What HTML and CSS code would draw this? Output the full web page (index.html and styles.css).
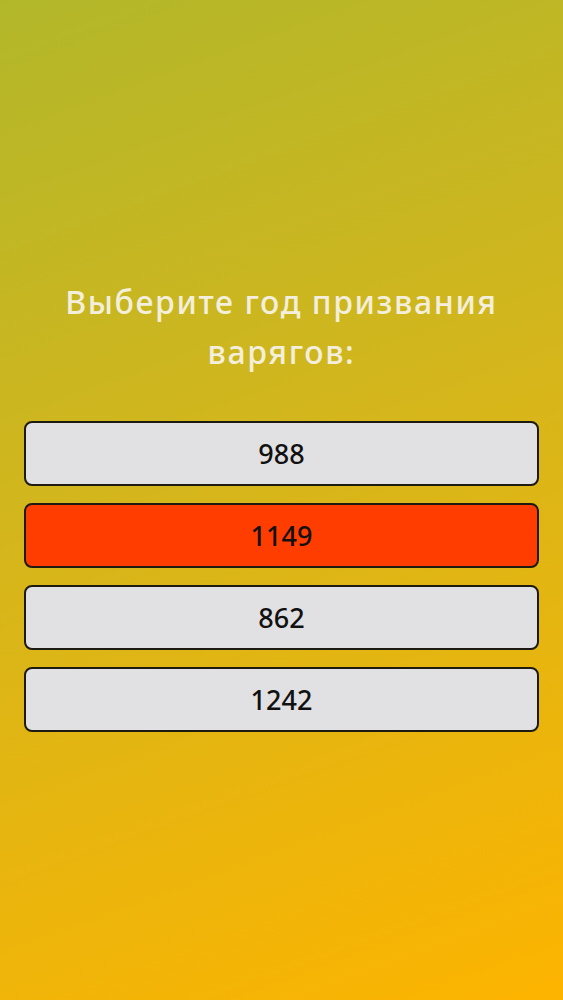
FILE: index.html
```html
<!DOCTYPE html>
<html lang="ru">
<head>
    <meta charset="UTF-8">
    <meta name="viewport" content="width=device-width, initial-scale=1.0">
    <title>Викторина</title>
    <link rel="stylesheet" href="styles.css">
</head>
<body>
    <main class="quiz">
        <h1 class="question">Выберите год призвания варягов:</h1>
        <div class="answers">
            <button class="answer">988</button>
            <button class="answer wrong">1149</button>
            <button class="answer">862</button>
            <button class="answer">1242</button>
        </div>
    </main>
</body>
</html>
```

FILE: styles.css
```css
/* Colors */
:root {
    --text-light: #f3efdc;
    --answer-bg: #e1e0e2;
    --answer-border: #1d1a12;
    --wrong-bg: #ff3d00;
}

* {
    margin: 0;
    padding: 0;
    box-sizing: border-box;
}

body {
    font-family: "Noto Sans", "Open Sans", sans-serif;
    min-height: 100vh;
    background: linear-gradient(160deg, #b2b72a 0%, #d4b61c 45%, #fdb400 100%);
}

.quiz {
    padding: 277px 24px 0;
}

.question {
    color: var(--text-light);
    font-size: 32px;
    font-weight: 500;
    line-height: 50px;
    text-align: center;
    letter-spacing: 1.6px;
    padding: 0 20px;
}

.answers {
    margin-top: 44px;
    display: flex;
    flex-direction: column;
    gap: 17px;
}

.answer {
    height: 65px;
    width: 100%;
    font-family: inherit;
    font-size: 27px;
    font-weight: 500;
    color: #111;
    background: var(--answer-bg);
    border: 2px solid var(--answer-border);
    border-radius: 8px;
    cursor: pointer;
}

.answer.wrong {
    background: var(--wrong-bg);
}
```
